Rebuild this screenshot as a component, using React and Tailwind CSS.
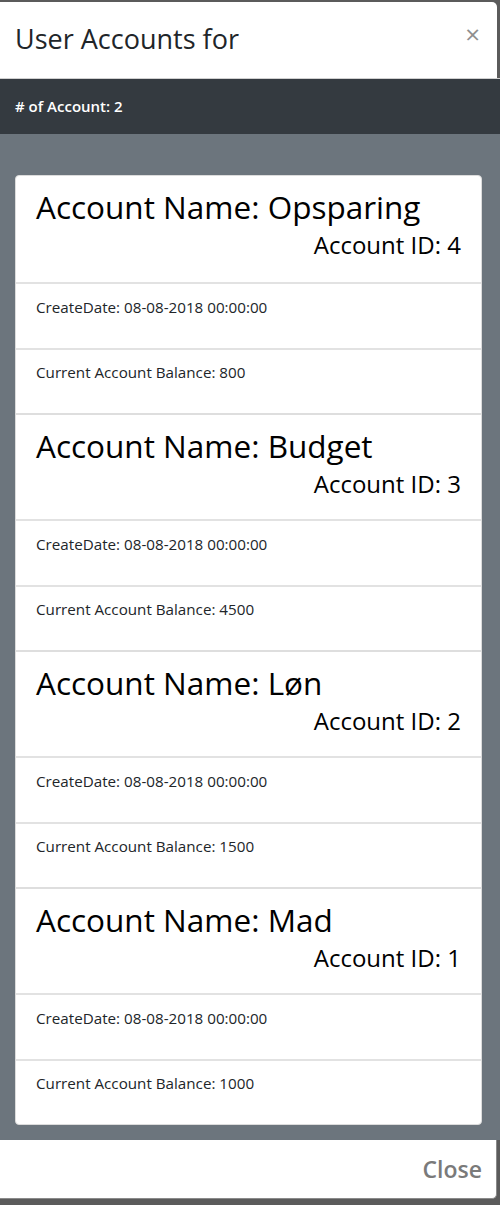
import React from "react";

const accounts = [
  { name: "Opsparing", id: 4, date: "08-08-2018 00:00:00", balance: 800 },
  { name: "Budget", id: 3, date: "08-08-2018 00:00:00", balance: 4500 },
  { name: "Løn", id: 2, date: "08-08-2018 00:00:00", balance: 1500 },
  { name: "Mad", id: 1, date: "08-08-2018 00:00:00", balance: 1000 },
];

export default function App() {
  return (
    <div
      className="w-[500px] h-[1205px] bg-[#5b5b5b] pt-[2px] overflow-hidden"
      style={{ fontFamily: '"Open Sans", "Noto Sans", sans-serif' }}
    >
      <div className="w-[497px] h-[76px] bg-white rounded-tr-[5px] flex items-start justify-between pl-[15px] pr-[17px]">
        <h5 className="text-[27px] leading-[36px] pt-[19px] text-[#212529] font-normal">User Accounts for</h5>
        <span className="text-[26px] leading-none pt-[19px] text-[#8f8f8f] font-normal">×</span>
      </div>
      <div className="w-[500px] h-[56px] bg-[#343a40] flex items-center px-[15px] border-t border-[#d0d0d0]">
        <span className="text-white text-[15px] font-semibold">
          # of Account: 2
        </span>
      </div>
      <div className="w-[500px] h-[1006px] bg-[#6c757d] pt-[41px] pl-[15px]">
        <div className="w-[467px] bg-white rounded-[4px] border border-[#dcdcdc] overflow-hidden">
          {accounts.map((a, i) => (
            <div key={a.id}>
              <div className={"h-[106px] border-[#dedede] px-[20px] pt-[11px] " + (i > 0 ? "border-t-2" : "")}>
                <div className="text-[31.5px] leading-[40px] text-black">
                  Account Name: {a.name}
                </div>
                <div className="text-[24px] leading-[30px] mt-[3px] text-black text-right">
                  Account ID: {a.id}
                </div>
              </div>
              <div className="h-[66px] border-t-2 border-[#e2e2e2] px-[20px] pt-[11px]">
                <span className="text-[15.2px] leading-[20px] text-[#212529]">CreateDate: {a.date}</span>
              </div>
              <div className="h-[65px] border-t-2 border-[#e2e2e2] px-[20px] pt-[10px]">
                <span className="text-[15.2px] leading-[20px] text-[#212529]">Current Account Balance: {a.balance}</span>
              </div>
            </div>
          ))}
        </div>
      </div>
      <div className="w-[497px] h-[59px] bg-white rounded-br-[5px] border-r border-b border-[#8a8a8a] flex items-center justify-end pr-[14px]">
        <span className="text-[23px] font-semibold text-[#7a7a7a]">Close</span>
      </div>
    </div>
  );
}
